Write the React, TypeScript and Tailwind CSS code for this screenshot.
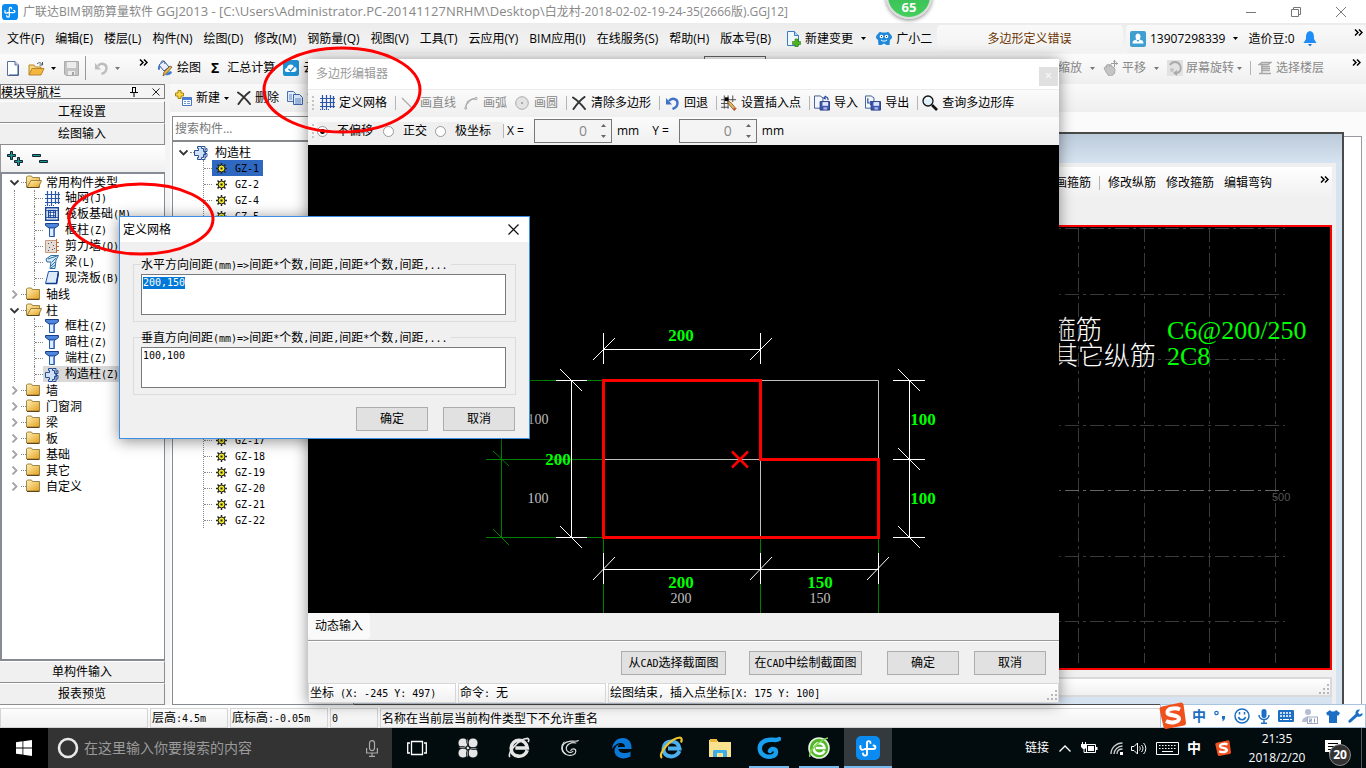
import React, { useEffect, useRef } from 'react';

const YA = "font-['Open_Sans','Noto_Sans_CJK_SC',sans-serif]";
const MONO = "font-['DejaVu_Sans_Mono',monospace] text-[10px]";

/* Latin runs are set in a half-width face beside the full-width Chinese. */
function Song({ children }: { children: string }) {
  return (
    <span className="whitespace-pre font-['Noto_Sans_CJK_SC',sans-serif] text-xs leading-4">
      {children.split(/([\x20-\x7e]+)/).map((part, i) =>
        i % 2 === 1 ? (
          <span key={i} className={MONO}>{part}</span>
        ) : (
          part
        ),
      )}
    </span>
  );
}

/* ---------- small shared pieces ---------- */

const Caret = ({ dim = false }: { dim?: boolean }) => (
  <svg width="5" height="3" viewBox="0 0 5 3" className="shrink-0">
    <path d="M0 0h5L2.500 3z" fill={dim ? '#777' : '#000'} />
  </svg>
);

const More = () => (
  <svg width="9" height="7" viewBox="0 0 9 7" className="shrink-0" fill="none" stroke="#000" strokeWidth="1.500">
    <path d="M1 .5l3 3-3 3M5 .5l3 3-3 3" />
  </svg>
);

const Sep = () => <span className="h-[14px] w-px shrink-0 bg-[#b5b5b5]" />;

const Grip = () => (
  <svg width="2" height="14" viewBox="0 0 2 14" className="shrink-0">
    <path d="M0 0h2v2H0zM0 4h2v2H0zM0 8h2v2H0zM0 12h2v2H0z" fill="#c4c4c4" />
  </svg>
);

const SizeGrip = () => (
  <svg width="11" height="11" viewBox="0 0 11 11" className="shrink-0">
    <path d="M8 0h2v2H8zM4 4h2v2H4zM8 4h2v2H8zM0 8h2v2H0zM4 8h2v2H4zM8 8h2v2H8z" fill="#b8b8b8" />
  </svg>
);

/* ---------- icons ---------- */

const AppLogo = ({ size = 16 }: { size?: number }) => (
  <svg width={size} height={size} viewBox="0 0 24 24" className="shrink-0">
    <rect width="24" height="24" rx="5" fill="#0b8bf0" />
    <path d="M14.500 7c0-2.500-3.500-2.500-3.500 0v11c0 2.500-4 2-4-.5M4.500 10c-1 4.500 2.500 4 4.500 3h8.500c2.500 0 2.500-3.500 0-3.500" fill="none" stroke="#fff" strokeWidth="1.900" strokeLinecap="round" />
  </svg>
);

const NewDoc = () => (
  <svg width="12" height="15" viewBox="0 0 12 15">
    <path d="M.5.5h7.500l3.500 3.500v10.500H.5z" fill="#fdfeff" stroke="#55719c" />
    <path d="M8 .5V4h3.500" fill="#cfdcf0" stroke="#55719c" />
    <path d="M11 5v9M2 14h9" stroke="#34507c" />
  </svg>
);

const OpenFolder = () => (
  <svg width="17" height="15" viewBox="0 0 17 15">
    <path d="M1 14V4h5l1.500 2H13v3" fill="#f7d77a" stroke="#b8862b" />
    <path d="M1 14l3-6.500h12L13 14z" fill="#f4b63d" stroke="#b8862b" />
    <path d="M9 3c2-2 4-1.500 5 .5M14.500 1v3h-3" fill="none" stroke="#456" />
  </svg>
);

const SaveGrey = () => (
  <svg width="15" height="15" viewBox="0 0 15 15">
    <path d="M.5.5h14v14H2l-1.500-1.500z" fill="#c3c3c3" stroke="#aaa" />
    <path d="M3 1h9v6H3zM4 10h7v4H4z" fill="#ececec" />
    <path d="M8 11h2v3H8z" fill="#a5a5a5" />
  </svg>
);

const Undo = ({ grey = false }: { grey?: boolean }) => (
  <svg width="14" height="14" viewBox="0 0 14 14" fill="none">
    <path d="M4 5c3-4 8.500-2 8.500 2 0 3-2 5-5 6" stroke={grey ? '#bdbdbd' : '#3f73c7'} strokeWidth="2.400" />
    <path d="M1 2v6.500h6z" fill={grey ? '#bdbdbd' : '#3f73c7'} />
  </svg>
);

const Paint = () => (
  <svg width="16" height="17" viewBox="0 0 16 17">
    <path d="M2 5l5-4 5 6-5 4z" fill="#e9f0fb" stroke="#365a96" />
    <path d="M2 5C0 8 1 10 2 10s1.500-2 1-4" fill="#4a78c4" />
    <path d="M4 3c0-3 4-3 4 1" fill="none" stroke="#365a96" />
    <path d="M15 7l-5 6-4 3 1-4 6-6z" fill="#e7b443" stroke="#5c4b23" strokeWidth=".7" />
    <path d="M8 15c3 1 7-1 7-3l-2-1z" fill="#4179d4" />
  </svg>
);

const CloudCheck = () => (
  <svg width="16" height="16" viewBox="0 0 16 16">
    <rect width="16" height="16" rx="2" fill="#1e8fd0" />
    <path d="M4 12c-3 0-3-4 0-4 0-4 6-5 7-1 4 0 3 5 0 5z" fill="#fff" />
    <path d="M5.500 9l2 2 3.500-4" fill="none" stroke="#1e8fd0" strokeWidth="1.400" />
  </svg>
);

const NewComp = () => (
  <svg width="17" height="16" viewBox="0 0 17 16">
    <path d="M3 .5h3V3h2.500v3H6v2.500H3V6H.5V3H3z" fill="#f7d649" stroke="#a8830e" />
    <path d="M7.500 7.500h9v8h-9z" fill="#fff" stroke="#4a76c0" />
    <path d="M8 8h8v2H8z" fill="#4a80d8" />
    <path d="M9 11.500h2M12 11.500h3M9 13.500h2M12 13.500h3" stroke="#6f98d8" />
  </svg>
);

const Cross = () => (
  <svg width="14" height="14" viewBox="0 0 14 14" fill="none" stroke="#333" strokeWidth="2" strokeLinecap="round">
    <path d="M1 1.500C5 4 9 8 13 13M12.500 1C8 4 5 8 1.500 13" />
  </svg>
);

const Copy = () => (
  <svg width="16" height="14" viewBox="0 0 16 14">
    <path d="M.5.5h6l2 2v8h-8z" fill="#e2edfc" stroke="#4a6fa9" />
    <path d="M6.500 3.500h6l3 3v7h-9z" fill="#dbe9fc" stroke="#3c65a8" />
    <path d="M2 4h3M2 6h3M2 8h3M8 8h6M8 10h6M8 12h6" stroke="#5e89cc" />
  </svg>
);

const DocPlus = () => (
  <svg width="15" height="16" viewBox="0 0 15 16">
    <path d="M1.500.5h7l4 4v10h-11z" fill="#f0f8ff" stroke="#3b7db8" />
    <path d="M8.500.5v4h4" fill="#b9d9f2" stroke="#3b7db8" />
    <path d="M9 8h3v2.500h2.500v3H12V16H9v-2.500H6.500v-3H9z" fill="#4fb520" stroke="#2e7d12" strokeWidth=".6" />
  </svg>
);

const Mascot = () => (
  <svg width="16" height="15" viewBox="0 0 16 15">
    <path d="M2.500 2C3.500.5 5 1 6 1.500h4c1-.5 2.500-1 3.500.5.5 1.500 2.500 2 2.500 4s-1.500 2-2 3l-.5 5h-3L8 12.500 5.500 14h-3L2 9C1.500 8 0 8 0 6s2-2.500 2.500-4z" fill="#2089db" />
    <circle cx="5.500" cy="5.500" r="1.800" fill="#fff" /><circle cx="10.500" cy="5.500" r="1.800" fill="#fff" />
    <path d="M5 9c2 1.500 4 1.500 6 0" fill="none" stroke="#fff" />
    <path d="M5 5h1v1H5zM10 5h1v1h-1z" fill="#124" />
  </svg>
);

const UserBox = () => (
  <svg width="16" height="16" viewBox="0 0 16 16" className="shrink-0">
    <rect width="16" height="16" rx="2" fill="#3f9fd0" />
    <path d="M5.500 5.500c0-4 5-4 5 0 0 2-1 3-1 3 2 .5 4 1 4 4h-11c0-3 2-3.500 4-4 0 0-1-1-1-3z" fill="#fff" />
    <path d="M6.500 9h3l-1.500 2z" fill="#3f9fd0" />
  </svg>
);

const Bell = () => (
  <svg width="14" height="16" viewBox="0 0 14 16" className="shrink-0">
    <path d="M7 0c4 1 4 4 4 8l2.500 4H.5L3 8c0-4 0-7 4-8z" fill="#1f8df5" />
    <path d="M5 13h4l-2 2.500z" fill="#1b75cf" />
  </svg>
);

const Grid = () => (
  <svg width="15" height="15" viewBox="0 0 15 15" stroke="#2b55a8" fill="none">
    <path d="M2.500 0v15M6.500 0v15M10.500 0v13M13.500 1v12M0 3.500h15M0 7.500h15M0 11.500h15" strokeWidth="1.200" />
    <path d="M0 14.500h1M4 14.500h1M8 14.500h1" />
  </svg>
);

const Line = () => (
  <svg width="14" height="14" viewBox="0 0 14 14"><path d="M1 2l9 9" stroke="#aaa" strokeWidth="1.200" /></svg>
);

const Arc = () => (
  <svg width="14" height="14" viewBox="0 0 14 14" fill="none" stroke="#a9a9a9">
    <path d="M1.500 13C1.500 7 6 2.500 12 2.500" strokeWidth="1.300" />
    <circle cx="12" cy="2.500" r="1.200" fill="#eee" /><circle cx="1.700" cy="12.300" r="1" fill="#eee" /><circle cx="4" cy="6" r="1" fill="#eee" />
  </svg>
);

const Disc = () => (
  <svg width="14" height="14" viewBox="0 0 14 14">
    <circle cx="7" cy="7" r="6.300" fill="#e3e3e3" stroke="#aaa" /><circle cx="7" cy="7" r="1" fill="#999" />
  </svg>
);

const SetPoint = () => (
  <svg width="17" height="16" viewBox="0 0 17 16">
    <path d="M3.500 0v14M7.500 0v14M12.500 0v7M0 4.500h16M0 8.500h9M0 12.500h8" stroke="#444" />
    <path d="M4 2h4v4H4z" fill="#000" />
    <path d="M7 6l3 1 6 7-2 2-6-7z" fill="#e3b566" stroke="#7a4c1c" strokeWidth=".8" />
    <path d="M13 13l3 1-2 2z" fill="#d43a2a" />
  </svg>
);

const Disk = ({ out = false }: { out?: boolean }) => (
  <svg width="17" height="16" viewBox="0 0 17 16">
    <path d="M.5.5h6l3 2v11h-9z" fill="#f2f6fd" stroke="#40578c" />
    <path d="M6.500 6.500h10v9h-10z" fill="#3d56b3" stroke="#263a80" />
    <path d="M9 7h6v4H9z" fill="#dfe6f8" /><path d="M10 12.500h4V15h-4z" fill="#aab6dc" />
    <path d={out ? 'M3 3v5h4M5.500 6l2 2-2 2' : 'M15 5c0-3-2-4-4-3M12.500.5l-2 2 2 1.500'} fill="none" stroke="#2c4a9b" strokeWidth="1.300" />
  </svg>
);

const Lens = () => (
  <svg width="16" height="16" viewBox="0 0 16 16">
    <circle cx="6" cy="6" r="5" fill="#ddf0fa" stroke="#111" strokeWidth="1.300" />
    <path d="M4 4c1-1 3-1 4 0" stroke="#fff" strokeWidth="1.500" fill="none" />
    <path d="M10 10l5 5" stroke="#111" strokeWidth="2.600" />
  </svg>
);

const Hand = () => (
  <svg width="15" height="16" viewBox="0 0 15 16">
    <path d="M1 8l1.500-1.500 1 1V5l2-.5 1 2V4.500l2 .5.500 2 2 .5 1 2-.5 4-3 2.500H6L3 12z" fill="#c4c4c4" stroke="#a8a8a8" />
    <path d="M11.500 0v7M8 3.500h7" stroke="#999" /><path d="M10 2L11.500 0 13 2M13 2l2 1.500L13 5" fill="#999" />
  </svg>
);

const Rotate = () => (
  <svg width="16" height="16" viewBox="0 0 16 16">
    <rect width="16" height="16" fill="#e2e2e2" />
    <path d="M3 5c2-4 8-4 10 0s0 8-4 8" fill="none" stroke="#aaa" strokeWidth="1.800" />
    <path d="M10 10v6l-4-3z" fill="#aaa" /><circle cx="5" cy="10" r="2" fill="#c5c5c5" />
  </svg>
);

const Floors = () => (
  <svg width="14" height="14" viewBox="0 0 14 14" fill="none" stroke="#a6a6a6">
    <path d="M4 1.500h9L10 3.500H1zM3 5.500h9M3 7.500h9M3 9.500h9M1 12.500h12M4 4v9" strokeWidth="1.300" />
  </svg>
);

const Folder = ({ open }: { open: boolean }) => (
  <svg width="16" height="14" viewBox="0 0 16 14" className="shrink-0">
    <defs>
      <linearGradient id="folderFill" x1="0" y1="0" x2="1" y2="1">
        <stop offset="0" stopColor="#fff1b8" /><stop offset="1" stopColor="#e3a11e" />
      </linearGradient>
    </defs>
    <path d="M.5 12V2l1-1h4l1 1.500h7V12z" fill="url(#folderFill)" stroke="#8a6c2c" strokeWidth=".8" />
    {open && <path d="M1 12.500l4-7h10.500l-3 7z" fill="url(#folderFill)" stroke="#8a6c2c" strokeWidth=".8" />}
    <path d="M1 12.500h12.500" stroke="#5c4720" />
  </svg>
);

const Raft = () => (
  <svg width="14" height="14" viewBox="0 0 14 14" fill="none" stroke="#16469b">
    <path d="M.7.7h12.600v12.600H.7zM3.500 3.500h7v7h-7z" strokeWidth="1.400" /><path d="M5.500 3v8M8.500 3v8M3 5.500h8M3 8.500h8M0 3.500h3M11 3.500h3M0 10.500h3M11 10.500h3" strokeWidth=".8" />
  </svg>
);

const Column = () => (
  <svg width="14" height="14" viewBox="0 0 14 14">
    <path d="M.5.5h13v2L10 5H4L.5 2.500z" fill="#4f86dc" stroke="#173f8a" />
    <path d="M4.500 5h5v8.500h-5z" fill="#e3eefd" stroke="#2456a8" /><path d="M8 6h1.500v7H8z" fill="#5c8fe0" />
  </svg>
);

const Wall = () => (
  <svg width="14" height="14" viewBox="0 0 14 14">
    <path d="M.5 1.500h11v12H.5z" fill="#e4dcd6" stroke="#c79a80" />
    <path d="M3 4h1v1H3zM6 3h1v1H6zM8 6h1v1H8zM4 8h1v1H4zM7 10h1v1H7zM3 11h1v1H3zM9 9h1v1H9z" fill="#555" />
    <path d="M11.500 3.500H14M11.500 7.500H14M11.500 11.500H14M11.500 0v14" stroke="#c66a3a" />
  </svg>
);

const Beam = () => (
  <svg width="14" height="14" viewBox="0 0 14 14">
    <path d="M1 4l5-3.500h7.500L11 5l-1 8.500H5L6 7H2z" fill="#d6e8f8" stroke="#2c6b9e" />
    <path d="M3 4l9-3M7 7l4-4M6 11l4-4M6 13l4-3" stroke="#2f79b0" />
  </svg>
);

const Slab = () => (
  <svg width="14" height="14" viewBox="0 0 14 14">
    <path d="M3.500.5h10l-2 12H.5z" fill="#dceafc" stroke="#2257a9" /><path d="M1 12.500h10.500l2-11" fill="none" stroke="#0d3c8a" strokeWidth="1.600" />
  </svg>
);

const GzCol = () => (
  <svg width="14" height="15" viewBox="0 0 14 15">
    <path d="M3.500 1.500h4v2h2v3h2v3h-2v3h-2v2h-4v-2h1v-2h-4v-5h4v-2h-1z" fill="#cfe0f8" stroke="#254e94" />
    <path d="M8 1.500h3v3l2-1v3h-2v2h2v3l-2 1v2H8M11 4.500v8" fill="none" stroke="#254e94" />
  </svg>
);

const Gear = () => (
  <svg width="11" height="11" viewBox="0 0 11 11" className="shrink-0">
    <path d="M5.500 0v11M0 5.500h11M1.500 1.500l8 8M9.500 1.500l-8 8" stroke="#222" strokeWidth="1.500" />
    <circle cx="5.500" cy="5.500" r="3.400" fill="#f3ee2c" stroke="#222" /><path d="M4.500 4.500h2v2h-2z" fill="#222" />
  </svg>
);

const Chevron = ({ open }: { open: boolean }) => (
  <svg width="9" height="9" viewBox="0 0 9 9" fill="none" strokeWidth="1.800" className="shrink-0">
    {open ? <path d="M.5 2.500l4 4 4-4" stroke="#333" /> : <path d="M2.500.5l4 4-4 4" stroke="#a3a3a3" />}
  </svg>
);

/* ---------- component navigation tree ---------- */

type Branch = { name: string; open?: boolean; kids?: { name: string; icon: React.ReactNode; on?: boolean }[] };

const branches: Branch[] = [
  {
    name: '常用构件类型', open: true, kids: [
      { name: '轴网(J)', icon: <Grid /> },
      { name: '筏板基础(M)', icon: <Raft /> },
      { name: '框柱(Z)', icon: <Column /> },
      { name: '剪力墙(Q)', icon: <Wall /> },
      { name: '梁(L)', icon: <Beam /> },
      { name: '现浇板(B)', icon: <Slab /> },
    ],
  },
  { name: '轴线' },
  {
    name: '柱', open: true, kids: [
      { name: '框柱(Z)', icon: <Column /> },
      { name: '暗柱(Z)', icon: <Column /> },
      { name: '端柱(Z)', icon: <Column /> },
      { name: '构造柱(Z)', icon: <GzCol />, on: true },
    ],
  },
  { name: '墙' }, { name: '门窗洞' }, { name: '梁' }, { name: '板' }, { name: '基础' }, { name: '其它' }, { name: '自定义' },
];

const members = [1, 2, 4, 5, 6, 7, 8, 9, 10, 11, 12, 13, 14, 15, 16, 23, 24, 17, 18, 19, 20, 21, 22];

function SideButton({ children }: { children: string }) {
  return (
    <button className="h-[22px] w-full shrink-0 border-b border-r border-t border-b-[#8d8d8d] border-r-[#8d8d8d] border-t-white bg-[#f0f0f0] text-center leading-5">
      <Song>{children}</Song>
    </button>
  );
}

function Navigator() {
  return (
    <nav className="flex w-[165px] shrink-0 flex-col">
      <div className="flex h-[15px] shrink-0 items-center border border-[#7c7c7c] leading-3">
        <Song>模块导航栏</Song>
        <button aria-label="固定" className="ml-auto mr-[14px]">
          <svg width="8" height="10" viewBox="0 0 8 10" fill="none" stroke="#000"><path d="M2 .5h4M2.500 0v5.500M5.500 0v5.500M0 5.500h8M4 6v4" /></svg>
        </button>
        <button aria-label="关闭" className="mr-1">
          <svg width="8" height="8" viewBox="0 0 8 8" stroke="#222"><path d="M.5.5l7 7M7.500.5l-7 7" /></svg>
        </button>
      </div>
      <div className="mt-0.5 flex flex-col"><SideButton>工程设置</SideButton><SideButton>绘图输入</SideButton></div>
      <div className="flex h-[27px] shrink-0 items-center gap-2 border-l border-[#999] bg-linear-to-b from-white to-[#f0f0f0] pl-1.5">
        <button aria-label="全部展开">
          <svg width="17" height="15" viewBox="0 0 17 15" fill="none" strokeWidth="1"><path d="M3.500.5h2v3h3v2h-3v3h-2v-3h-3v-2h3zM10.500 6.500h2v3h3v2h-3v3h-2v-3h-3v-2h3z" fill="#1f9b8f" stroke="#123" /></svg>
        </button>
        <button aria-label="全部折叠">
          <svg width="16" height="12" viewBox="0 0 16 12"><path d="M.5 1.500h8v2h-8zM7.500 7.500h8v2h-8z" fill="#1f9b8f" stroke="#123" /></svg>
        </button>
      </div>
      <div className="flex-1 overflow-hidden border-2 border-r border-[#868b94] bg-white">
        <ul>
          {branches.map((b) => (
            <li key={b.name}>
              <button className="flex h-4 items-center pl-2">
                <Chevron open={!!b.open} />
                <span className="ml-0.5 w-[5px] border-t border-dotted border-[#888]" />
                <Folder open={!!b.open} />
                <span className="ml-1"><Song>{b.name}</Song></span>
              </button>
              {b.kids && (
                <ul className="ml-3 border-l border-dotted border-[#888]">
                  {b.kids.map((k) => (
                    <li key={k.name} className="ml-[19px] border-l border-dotted border-[#888]">
                      <button className="flex h-4 items-center whitespace-nowrap">
                        <span className="w-2 border-t border-dotted border-[#888]" />
                        <span className={k.on ? 'flex h-4 items-center bg-[#d9d9d9] pl-0.5' : 'flex h-4 items-center pl-0.5'}>
                          <span className="flex w-5">{k.icon}</span><Song>{k.name}</Song>
                        </span>
                      </button>
                    </li>
                  ))}
                </ul>
              )}
            </li>
          ))}
        </ul>
      </div>
      <SideButton>单构件输入</SideButton>
      <SideButton>报表预览</SideButton>
    </nav>
  );
}

function MemberPanel() {
  return (
    <section className="flex w-[184px] shrink-0 flex-col pl-0.5">
      <input aria-label="搜索构件" placeholder="搜索构件..." className={`mt-1 h-[25px] w-full shrink-0 border border-[#888] bg-white px-0.5 text-xs tracking-normal text-[#333] outline-none placeholder:text-[#777] ${YA}`} />
      <div className="w-full flex-1 overflow-hidden border border-[#868b94] bg-white">
        <div className="mt-0.5 flex h-4 items-center pl-1.5">
          <Chevron open />
          <span className="ml-0.5 w-1 border-t border-dotted border-[#888]" />
          <GzCol /><span className="ml-[7px]"><Song>构造柱</Song></span>
        </div>
        <ul className="ml-[30px] border-l border-dotted border-[#888]">
          {members.map((n) => (
            <li key={n} className="flex h-4 items-center">
              <span className="w-2 border-t border-dotted border-[#888]" />
              <button className={n === 1 ? 'flex h-4 items-center gap-2 bg-[#2f68c0] pl-1 pr-1' : 'flex h-4 items-center gap-2 pl-1 pr-1'}>
                <Gear /><Song>{`GZ-${n}`}</Song>
              </button>
            </li>
          ))}
        </ul>
      </div>
    </section>
  );
}

/* ---------- section drawing window ---------- */

function SectionWindow() {
  return (
    <section className="flex flex-1 pt-5 pr-1">
      <div className="flex flex-1 flex-col border-b border-r-2 border-t-2 border-[#4a4a4a] bg-[#d6e3f1]">
        <div className="h-[29px] shrink-0 bg-linear-to-b from-[#bccbda] to-[#d6e3f1]" />
        <div className="mr-1.5 flex flex-1 flex-col border-r-4 border-t-4 border-[#efefef] bg-[#f0f0f0]">
          <div className={`flex h-[32px] shrink-0 items-center justify-end bg-linear-to-b from-white to-[#f0f0f0] text-xs leading-4 ${YA}`}>
            <button>画箍筋</button>
            <span className="mx-2 flex"><Sep /></span>
            <button>修改纵筋</button>
            <button className="ml-[10px]">修改箍筋</button>
            <button className="ml-[10px] mr-12">编辑弯钩</button>
            <button aria-label="更多" className="mb-2 mr-[3px]"><More /></button>
          </div>
          <div className="mt-[26px] flex flex-1 justify-end border-b-2 border-r-2 border-t-2 border-[#f00] bg-black">
            <svg width="292" height="436" viewBox="1038 227 292 436">
              <g stroke="#3a3a3a" strokeDasharray="14 4 3 4" fill="none">
                <path d="M1078.500 228v438M1144.500 228v438M1209.500 228v438M1275.500 228v438" />
                <path d="M1040 228.500h245M1040 294.500h245M1040 359.500h245M1040 425.500h245M1040 556.500h245M1040 621.500h245" />
                <path d="M1040 490.500h245" stroke="#666" />
              </g>
              <g fill="#fff" fontFamily="'Noto Sans CJK SC'" fontWeight="300" fontSize="26">
                <text x="1050" y="339">箍筋</text><text x="1052" y="365">其它纵筋</text>
              </g>
              <g fill="#0f0" fontFamily="'Liberation Serif'" fontSize="26">
                <text x="1167" y="339">C6@200/250</text><text x="1167" y="365">2C8</text>
              </g>
              <text x="1272" y="501" fill="#555" fontFamily="'Liberation Sans'" fontSize="11">500</text>
            </svg>
          </div>
          <div className="mt-[7px] flex h-5 shrink-0 items-end justify-end border-2 border-[#dadada] bg-linear-to-b from-white to-[#f0f0f0]"><SizeGrip /></div>
          <div className="h-[7px] shrink-0 bg-[#d6e3f1]" />
        </div>
      </div>
      <div className="mt-1 w-[18px] shrink-0 border-b border-r border-t border-[#999ba3] bg-white" />
    </section>
  );
}

/* ---------- polygon editor ---------- */

function Tool({ icon, label, dim }: { icon: React.ReactNode; label: string; dim?: boolean }) {
  return (
    <button className={dim ? 'flex shrink-0 items-center gap-1 text-[#888]' : 'flex shrink-0 items-center gap-1 text-black'}>
      <span className="flex w-4 justify-center">{icon}</span>{label}
    </button>
  );
}

function Offset({ id, label }: { id: string; label: string }) {
  return (
    <div className="flex items-center">
      <label htmlFor={id}>{label} =</label>
      <div className="ml-2.5 mr-[5px] flex h-6 w-[78px] items-center border border-[#777] bg-[#f4f4f4]">
        <input id={id} defaultValue="0" className="w-0 flex-1 bg-transparent pr-2.5 text-right text-sm text-[#888] outline-none" />
        <div className="flex w-[14px] flex-col gap-2 pl-1">
          <button aria-label={`${label} +`}><svg width="5" height="3" viewBox="0 0 5 3" className="block"><path d="M0 3h5L2.500 0z" fill="#666" /></svg></button>
          <button aria-label={`${label} -`}><svg width="5" height="3" viewBox="0 0 5 3" className="block"><path d="M0 0h5L2.500 3z" fill="#666" /></svg></button>
        </div>
      </div>
      <span>mm</span>
    </div>
  );
}

function Plan() {
  return (
    <svg viewBox="308 145 751 468" className="block w-full bg-black">
      <g stroke="#008000" fill="none">
        <path d="M486 380.500h117M486 459.500h117M486 537.500h117M501.500 380v158M603.500 537v76M760.500 537v76M878.500 537v76" />
        <path d="M493 451l16 15M493 529l16 16" />
      </g>
      <g stroke="#c0c0c0" fill="none">
        <path d="M760 380.500h118.500v79M603 459.500h157.500v78" />
      </g>
      <g stroke="#fff" fill="none">
        <path d="M571.500 380v158M556 380.500h31M556 537.500h31M560 369l22 22M560 526l22 22" />
        <path d="M603 349.500h158M603.500 333v31M760.500 333v31M593 360l22-22M750 360l22-22" />
        <path d="M909.500 380v158M893 380.500h32M893 459.500h32M893 537.500h32M898 369l22 22M898 448l22 22M898 526l22 22" />
        <path d="M603 569.500h276M603.500 553v31M760.500 553v31M878.500 553v31M593 580l22-23M750 580l22-23M867 580l22-23" />
      </g>
      <path d="M603.500 380.500h157v79h118v78h-275z" fill="none" stroke="#f00" strokeWidth="3" />
      <path d="M732 451.500l16 16M748 451.500l-16 16" stroke="#f00" strokeWidth="2.500" />
      <g fill="#0f0" fontFamily="'Liberation Serif'" fontWeight="700" fontSize="17" textAnchor="middle">
        <text x="681" y="341">200</text><text x="558" y="465">200</text><text x="923" y="425">100</text>
        <text x="923" y="504">100</text><text x="681" y="588">200</text><text x="820" y="588">150</text>
      </g>
      <g fill="#c0c0c0" fontFamily="'Liberation Serif'" fontSize="14" textAnchor="middle">
        <text x="538" y="424">100</text><text x="538" y="503">100</text><text x="681" y="603">200</text><text x="820" y="603">150</text>
      </g>
    </svg>
  );
}

const dialogButton = 'h-6 border border-[#adadad] bg-[#e1e1e1] leading-5';
const radio = 'size-[11px] appearance-none rounded-full border border-[#999]';

function PolygonEditor() {
  return (
    <section className={`absolute left-[308px] top-[59px] w-[751px] bg-[#f0f0f0] text-xs leading-4 text-black shadow-[0_1px_14px_rgba(0,0,0,0.45)] ${YA}`}>
      <header className="flex h-[30px] items-center bg-white pl-2 pr-px text-[#999]">
        <h2>多边形编辑器</h2>
        <button aria-label="关闭" className="ml-auto mt-1 flex size-[19px] items-center justify-center bg-[#e0e0e0] text-white">×</button>
      </header>
      <div className="flex h-7 items-center gap-2 border-t border-[#ececec] bg-linear-to-b from-[#fbfbfb] to-[#efefef] pb-0.5 pl-1">
        <Grip />
        <span className="-ml-[3px] flex"><Tool icon={<Grid />} label="定义网格" /></span><Sep />
        <span className="-ml-1 flex gap-[7px]">
          <Tool dim icon={<Line />} label="画直线" /><Tool dim icon={<Arc />} label="画弧" /><Tool dim icon={<Disc />} label="画圆" />
        </span>
        <Sep /><span className="-ml-1 flex"><Tool icon={<Cross />} label="清除多边形" /></span>
        <Sep /><span className="-ml-1 flex"><Tool icon={<Undo />} label="回退" /></span>
        <Sep /><span className="-ml-1 flex"><Tool icon={<SetPoint />} label="设置插入点" /></span>
        <Sep /><span className="-ml-1 flex gap-[7px]"><Tool icon={<Disk />} label="导入" /><Tool icon={<Disk out />} label="导出" /></span>
        <Sep /><span className="-ml-1 flex"><Tool icon={<Lens />} label="查询多边形库" /></span>
      </div>
      <div className="flex h-7 items-center bg-linear-to-b from-[#fbfbfb] to-[#efefef] pl-1">
        <Grip />
        <div className="ml-[3px] flex h-[18px] w-[186px] items-center bg-[#efefef]">
          <label className="flex items-center gap-[9px]">
            <input type="radio" name="offset" defaultChecked className={`${radio} bg-white bg-[radial-gradient(circle,#000_2px,transparent_3px)]`} />不偏移
          </label>
          <label className="ml-2.5 flex items-center gap-[9px]">
            <input type="radio" name="offset" className={`${radio} bg-white`} />正交
          </label>
          <label className="ml-2 flex items-center gap-[9px]">
            <input type="radio" name="offset" className={`${radio} bg-white`} />极坐标
          </label>
        </div>
        <Sep />
        <div className="ml-[3px] flex gap-[13px]"><Offset id="off-x" label="X" /><Offset id="off-y" label="Y" /></div>
      </div>
      <Plan />
      <div className="flex h-7 items-start border-b border-[#999]">
        <button className="h-[26px] rounded-sm bg-[#fafafa] px-[7px]">动态输入</button>
      </div>
      <div className="flex h-[42px] items-center justify-end border-t border-white pr-[13px]">
        <button className={`${dialogButton} w-[105px]`}><Song>从CAD选择截面图</Song></button>
        <button className={`${dialogButton} ml-[23px] w-[113px]`}><Song>在CAD中绘制截面图</Song></button>
        <button className={`${dialogButton} ml-[25px] w-[72px]`}><Song>确定</Song></button>
        <button className={`${dialogButton} ml-[15px] w-[72px]`}><Song>取消</Song></button>
      </div>
      <footer className="flex h-5 items-stretch gap-0.5 bg-linear-to-b from-white to-[#f0f0f0]">
        <div className="flex w-[148px] items-center border border-[#d7d7d7] pl-px"><Song>坐标 (X: -245 Y: 497)</Song></div>
        <div className="flex w-[148px] items-center border border-[#d7d7d7] pl-px"><Song>命令: 无</Song></div>
        <div className="flex flex-1 items-center border border-[#d7d7d7] pl-px"><Song>绘图结束, 插入点坐标[X: 175 Y: 100]</Song><span className="mb-px ml-auto self-end"><SizeGrip /></span></div>
      </footer>
    </section>
  );
}

/* ---------- grid definition dialog ---------- */

const box = `mx-[7px] mb-1.5 mt-0.5 block h-[41px] w-[365px] resize-none border border-[#7a7a7a] bg-white px-px py-0.5 leading-3 outline-none selection:bg-[#0078d7] selection:text-white ${MONO}`;

function GridDialog() {
  const first = useRef<HTMLTextAreaElement>(null);
  useEffect(() => {
    first.current?.focus();
    first.current?.select();
  }, []);
  return (
    <section className="absolute left-[119px] top-[216px] w-[411px] border border-[#3a8ee6] bg-[#f0f0f0] pb-[7px] text-black shadow-[0_2px_14px_rgba(0,0,0,0.45)]">
      <header className={`flex h-[25px] items-center bg-white pl-[3px] pr-2.5 text-xs leading-4 ${YA}`}>
        <h2>定义网格</h2>
        <button aria-label="关闭" className="ml-auto">
          <svg width="11" height="11" viewBox="0 0 11 11" stroke="#111" strokeWidth="1.200"><path d="M.5.5l10 10M10.500.5l-10 10" /></svg>
        </button>
      </header>
      <div className="flex flex-col gap-[7px] px-[13px] pt-[14px]">
        <fieldset className="border border-[#dcdcdc]">
          <legend className="ml-[7px] h-4 pr-1 leading-4"><label htmlFor="grid-h"><Song>水平方向间距(mm)=&gt;间距*个数,间距,间距*个数,间距,...</Song></label></legend>
          <textarea id="grid-h" ref={first} defaultValue="200,150" className={box} />
        </fieldset>
        <fieldset className="border border-[#dcdcdc]">
          <legend className="ml-[7px] h-4 pr-1 leading-4"><label htmlFor="grid-v"><Song>垂直方向间距(mm)=&gt;间距*个数,间距,间距*个数,间距,...</Song></label></legend>
          <textarea id="grid-v" defaultValue="100,100" className={box} />
        </fieldset>
      </div>
      <div className="mt-3 flex justify-end gap-[15px] pr-3.5">
        <button className={`${dialogButton} w-[72px]`}><Song>确定</Song></button>
        <button className={`${dialogButton} w-[72px]`}><Song>取消</Song></button>
      </div>
    </section>
  );
}

/* ---------- main window bars ---------- */

const menus = ['文件(F)', '编辑(E)', '楼层(L)', '构件(N)', '绘图(D)', '修改(M)', '钢筋量(Q)', '视图(V)', '工具(T)', '云应用(Y)', 'BIM应用(I)', '在线服务(S)', '帮助(H)', '版本号(B)'];

function TitleBar() {
  return (
    <header className={`flex h-[23px] shrink-0 items-center bg-white pl-0.5 pr-5 text-xs leading-4 text-[#888] ${YA}`}>
      <AppLogo />
      <h1 className="ml-[5px] whitespace-nowrap">广联达BIM钢筋算量软件 <span className="text-[13px]">GGJ2013 - [C:\Users\Administrator.PC-20141127NRHM\Desktop\</span>白龙村-2018-02-02-19-24-35(2666版).GGJ12]</h1>
      <div className="ml-auto flex items-center gap-[35px]">
        <button aria-label="最小化"><svg width="10" height="10" viewBox="0 0 10 10" stroke="#777"><path d="M0 5.500h10" /></svg></button>
        <button aria-label="还原"><svg width="10" height="10" viewBox="0 0 10 10" stroke="#777" fill="none"><path d="M.5 2.500h7v7h-7zM2.500 2V.5h7v7H8" /></svg></button>
        <button aria-label="关闭"><svg width="10" height="10" viewBox="0 0 10 10" stroke="#777"><path d="M0 0l10 10M10 0L0 10" /></svg></button>
      </div>
    </header>
  );
}

function MenuBar() {
  return (
    <div className="flex h-[31px] shrink-0 items-center bg-linear-to-b from-[#ececec] to-[#f4f4f4]">
      <div className="flex w-[937px] items-center gap-[11px] whitespace-nowrap pl-[7px]">
        {menus.map((m) => <button key={m}>{m}</button>)}
        <button className="ml-1 flex items-center gap-1"><DocPlus />新建变更<span className="ml-1"><Caret /></span></button>
        <button className="-ml-px flex items-center gap-1"><Mascot />广小二</button>
      </div>
      <div className="h-7 flex-1 rounded-sm bg-linear-to-b from-[#f9f9f9] to-[#f2f2f2] pr-px text-center leading-7 text-[#6b3300]">多边形定义错误</div>
      <div className="ml-[3px] flex h-7 w-[240px] items-center rounded-sm bg-linear-to-b from-[#f9f9f9] to-[#f0f0f0] pl-1 pr-[3px]">
        <UserBox />
        <button className="ml-1 flex items-center gap-2">13907298339<Caret /></button>
        <span className="ml-2.5 mr-2">造价豆:0</span>
        <Bell />
        <button aria-label="更多" className="mb-3 ml-auto"><More /></button>
      </div>
    </div>
  );
}

function ToolBar() {
  return (
    <div className="flex h-[30px] shrink-0 items-center bg-linear-to-b from-[#fcfcfc] to-[#efefef] pb-0.5">
      <div className="flex w-[153px] items-center pl-[7px]">
        <button aria-label="新建"><NewDoc /></button>
        <button aria-label="打开" className="ml-[9px] flex items-center gap-1.5"><OpenFolder /><Caret /></button>
        <button aria-label="保存" className="ml-2"><SaveGrey /></button>
        <span className="ml-1.5 h-6 w-px bg-[#999]" />
        <button aria-label="撤销" className="ml-2 flex items-center gap-[7px]"><Undo grey /><Caret dim /></button>
        <button aria-label="更多" className="mb-3 ml-auto mr-[5px]"><More /></button>
      </div>
      <button className="ml-1 flex items-center gap-1"><Paint />绘图</button>
      <button className="ml-2.5 flex items-center gap-2"><span className="text-sm font-bold">Σ</span>汇总计算</button>
      <button className="ml-2 flex items-center gap-1"><CloudCheck />云检查</button>
      <select aria-label="楼层" className="ml-auto mr-[292px] h-6 w-[62px] appearance-none border border-[#666] bg-white" />
      <div className="flex items-center text-[#888]">
        <button className="flex items-center gap-2">缩放<Caret dim /></button>
        <button className="ml-2 flex items-center gap-1"><Hand />平移<span className="ml-1"><Caret dim /></span></button>
        <button className="ml-2 flex items-center gap-[3px]"><Rotate />屏幕旋转<Caret dim /></button>
        <span className="ml-2 mr-[7px] flex"><Sep /></span>
        <button className="flex items-center gap-1"><Floors />选择楼层</button>
      </div>
      <button aria-label="更多" className="mb-3 ml-7 mr-[5px]"><More /></button>
    </div>
  );
}

function StatusBar() {
  const cell = 'flex items-center border border-[#d4d4d4] pl-px';
  return (
    <footer className="flex h-[23px] shrink-0 items-stretch gap-0.5 bg-linear-to-b from-white to-[#f0f0f0] pt-[3px]">
      <div className={`${cell} w-[148px]`} />
      <div className={`${cell} w-[78px]`}><Song>层高:4.5m</Song></div>
      <div className={`${cell} w-[98px]`}><Song>底标高:-0.05m</Song></div>
      <div className={`${cell} w-[48px]`}><Song>0</Song></div>
      <div className={`${cell} flex-1`}><Song>名称在当前层当前构件类型下不允许重名</Song></div>
    </footer>
  );
}

/* ---------- input-method bar ---------- */

const SogouMark = ({ size }: { size: number }) => (
  <svg width={size} height={size} viewBox="0 0 27 27" className="shrink-0">
    <path d="M3 4.500L22 .5q2 0 2.500 2L27 21q0 2-2 2.500L7 27q-2 0-2.500-2L.5 7q0-2 2.500-2.500z" fill="#f0501c" />
    <path d="M21 7.500C16 5 7 7 8.500 11c1 3 11 1.500 11.500 5.500.3 4-8.500 5-13 2.500" fill="none" stroke="#fff" strokeWidth="4" />
  </svg>
);

function ImeBar() {
  return (
    <div className="absolute bottom-10 right-0 flex h-6 w-[206px] items-center gap-2 border border-[#a9c4dc] bg-white text-[#1c6fc4]">
      <span className="-ml-0.5 -mt-0.5"><SogouMark size={27} /></span>
      <span className="-ml-0.5 text-sm font-bold">中</span>
      <svg width="12" height="12" viewBox="0 0 12 12"><circle cx="2.500" cy="3" r="1.700" fill="none" stroke="#1c6fc4" strokeWidth="1.200" /><path d="M8 6h3c.5 3-1 5-3 5.500 1-1.500 1-2 0-3z" fill="#1c6fc4" /></svg>
      <svg width="16" height="16" viewBox="0 0 16 16" fill="none" stroke="#1c6fc4" strokeWidth="1.500"><circle cx="8" cy="8" r="7" /><path d="M4.500 9c1 3.500 6 3.500 7 0M5.500 4v2.500M10.500 4v2.500" /></svg>
      <svg width="12" height="15" viewBox="0 0 12 15"><rect x="3.500" width="5" height="9" rx="2.500" fill="#1c6fc4" /><path d="M1 6c0 6 10 6 10 0M6 11v3M3 14.300h6" fill="none" stroke="#1c6fc4" strokeWidth="1.500" /></svg>
      <svg width="16" height="12" viewBox="0 0 16 12"><rect width="16" height="12" rx="1" fill="#1c6fc4" /><path d="M2 3h12M2 6h12" stroke="#fff" strokeDasharray="2 1" strokeWidth="1.500" /><path d="M2 9.500h2M5 9.500h6M12 9.500h2" stroke="#fff" /></svg>
      <svg width="16" height="15" viewBox="0 0 16 15"><circle cx="6" cy="3" r="3" fill="#b4bdd2" /><path d="M0 13c0-7 12-7 12 0z" fill="#b4bdd2" /><rect x="5.500" y="8" width="10" height="6.500" fill="#fff" stroke="#9da9c4" /><path d="M7 10h2.500v1.500H7.500v1.500H10M12.500 9.500v4" stroke="#8c99b8" fill="none" /></svg>
      <svg width="14" height="13" viewBox="0 0 14 13"><path d="M4 0c1 2 5 2 6 0l4 3-2 3-1-1v8H3V5L2 6 0 3z" fill="#1c6fc4" /></svg>
      <svg width="15" height="14" viewBox="0 0 15 14"><path d="M14.500 4l-3 1.500-1.500-2L12 .5C9 0 7 2 7.500 5L.5 11.500c-.5 2 1 2.500 2 2L9.500 7.500c3 1 5.500-1 5-3.500z" fill="#1c6fc4" /></svg>
    </div>
  );
}

/* ---------- taskbar ---------- */

const EdgeShape = ({ color }: { color: string }) => (
  <path d="M1 11C2 3 7 0 12 0c6 0 9 5 8.500 11H7.500c0 4 7 5.500 12 2.500v5C11 23 3 19 3.500 12 4 9 6 7 8.500 6 7 7.500 7 8 7 9h7c0-5-8-6-13 2z" fill={color} />
);

const Swirl = ({ a, size, w }: { a: string; size: number; w: number }) => (
  <svg width={size} height={size} viewBox="0 0 24 24" fill="none" stroke={a} strokeWidth={w} strokeLinecap="round">
    <path d="M22 3c-3 2-6 0-11 1C5 5 2 9 3 14c1 6 8 8 13 6 4-1.500 4-7 0-7-2 0-2.500 1-3 2" />
    {w < 3 && <path d="M19 6c-6-1.500-12 2-11.500 7 .5 4 5 5.500 8 3M5 5c-4 4-4 11 1 14" />}
  </svg>
);

function TaskButton({ label, active, running, children }: { label: string; active?: boolean; running?: boolean; children: React.ReactNode }) {
  const tone = active ? 'w-12 bg-[#33393c] border-[#76b9ed]' : running ? 'w-10 mx-[5px] border-[#76b9ed]' : 'w-[49px] border-transparent';
  return <button aria-label={label} className={`flex h-10 shrink-0 items-center justify-center border-b-2 pt-0.5 ${tone}`}>{children}</button>;
}

function Taskbar() {
  return (
    <footer className={`flex h-10 shrink-0 items-center bg-[#020b0e] text-xs text-white ${YA}`}>
      <button aria-label="开始" className="flex h-10 w-12 items-center justify-center bg-black">
        <svg width="16" height="16" viewBox="0 0 16 16" fill="#fff"><path d="M0 2.200l6.500-.9v6.200H0zM7.300 1.200L16 0v7.500H7.300zM0 8.400h6.500v6.200L0 13.700zM7.300 8.400H16V16l-8.700-1.200z" /></svg>
      </button>
      <div className="flex h-10 w-[344px] items-center bg-[#333] pl-[9px] pr-3.5">
        <svg width="22" height="22" viewBox="0 0 22 22"><circle cx="11" cy="11" r="9" fill="none" stroke="#e8e8e8" strokeWidth="2.600" /></svg>
        <input aria-label="在这里输入你要搜索的内容" placeholder="在这里输入你要搜索的内容" className="ml-[5px] w-0 flex-1 bg-transparent text-sm outline-none placeholder:text-[#9a9a9a]" />
        <button aria-label="语音">
          <svg width="12" height="17" viewBox="0 0 12 17" fill="none" stroke="#aaa" strokeWidth="1.200"><rect x="3.500" y=".6" width="5" height="10" rx="2.500" /><path d="M.6 8v5h10.800V8M6 13v3M3 16.400h6" /></svg>
        </button>
      </div>
      <div className="mr-[3px] flex gap-0.5">
        <TaskButton label="任务视图">
          <svg width="20" height="16" viewBox="0 0 20 16" fill="none" stroke="#fff" strokeWidth="1.300"><path d="M4.500 1.500h11v13h-11zM3 3H.7v10H3M17 3h2.300v10H17" /></svg>
        </TaskButton>
        <TaskButton label="风车">
          <svg width="22" height="22" viewBox="0 0 22 22" fill="#e6e6e6" stroke="#020b0e" strokeWidth=".8">
            <circle cx="6" cy="6" r="5" /><circle cx="16" cy="6" r="5" /><circle cx="16" cy="16" r="5" /><circle cx="6" cy="16" r="5" />
            <path d="M11 1v6c0 3 1 4 4 4h6c-2 2-6 2-8 .5-1 0-2 1-2 3V21c-2-2-2-6-.5-8 0-1-1-2-3-2H1c2-2 6-2 8-.5 1 0 1.500-1 1.500-3C9 5 9.500 3 11 1z" />
          </svg>
        </TaskButton>
        <TaskButton label="浏览器">
          <svg width="22" height="22" viewBox="0 0 24 24"><path d="M21 14.500C18 24 3 23 3.500 12 4 1 20 1 21 12H8" fill="none" stroke="#e6e6e6" strokeWidth="4" /><path d="M2 22C-1 17 12 2 21 1.500c2 0 2 2 1 4" fill="none" stroke="#e6e6e6" strokeWidth="1.800" /></svg>
        </TaskButton>
        <TaskButton label="广联达云"><Swirl a="#ddd" size={20} w={1.400} /></TaskButton>
      </div>
      <TaskButton label="Edge"><svg width="21" height="21" viewBox="0 0 21 21"><EdgeShape color="#0a78d7" /></svg></TaskButton>
      <TaskButton label="Internet Explorer">
        <svg width="24" height="24" viewBox="0 0 24 24"><path d="M20.500 15C17 23 4 22 4.500 12.500 5 3 19.500 3 20.500 12.500H9" fill="none" stroke="#4db0ee" strokeWidth="4" /><path d="M3 22C-2 18 12 2 21 1.500c2 0 2 3 1 5" fill="none" stroke="#f0c52c" strokeWidth="2.200" /></svg>
      </TaskButton>
      <TaskButton label="资源管理器">
        <svg width="22" height="19" viewBox="0 0 22 19"><path d="M0 1h8l1.500 2H22v15H0z" fill="#fbe08d" /><path d="M1 0h7v3H1z" fill="#eeb93a" /><path d="M4 18v-6l1-1h12l1 1v6h-4v-4H8v4z" fill="#3aaee8" /></svg>
      </TaskButton>
      <TaskButton label="广联达" running><Swirl a="#18a0ee" size={24} w={4.500} /></TaskButton>
      <TaskButton label="360浏览器" running>
        <svg width="22" height="22" viewBox="0 0 22 22"><circle cx="11" cy="11" r="10" fill="#52b82a" stroke="#e8f5e0" strokeWidth="1.600" /><path d="M16.500 13.500c-2 5-11 4-10.500-2.500.5-6.500 10-6 10.500 0H8" fill="none" stroke="#fff" strokeWidth="2.400" /><path d="M2 20C0 15 11 3 20 1" fill="none" stroke="#7fd455" strokeWidth="1.500" /></svg>
      </TaskButton>
      <TaskButton label="广联达BIM钢筋算量软件" active><AppLogo size={24} /></TaskButton>

      <div className="ml-auto flex h-10 items-center">
        <span className="mr-2.5">链接</span>
        <svg width="12" height="7" viewBox="0 0 12 7" fill="none" stroke="#fff" strokeWidth="1.400" className="mr-2.5"><path d="M.5 6.500L6 1l5.500 5.500" /></svg>
        <svg width="17" height="12" viewBox="0 0 17 12" className="mr-3"><path d="M5.500 2.500h9v8h-9z" fill="none" stroke="#fff" /><path d="M7 4h6v5H7zM15 5h1.500v3H15zM0 2h6v3L4 7H2L0 5zM1 0h1v2H1zM4 0h1v2H4z" fill="#fff" /><path d="M3 7v3.500h3" stroke="#fff" fill="none" /></svg>
        <svg width="13" height="13" viewBox="0 0 13 13" fill="none" stroke="#ccc" strokeWidth="1.300" className="mr-2"><path d="M1 12C1 6 6 1 12.500 1M4 12c0-4 4-8 8.500-8M7 12c0-3 2-5 5.500-5" /><path d="M10 10h3v3h-3z" fill="#fff" stroke="none" /></svg>
        <svg width="17" height="13" viewBox="0 0 17 13" fill="none" stroke="#fff" className="mr-2"><path d="M.5 4.500h2.500L6.500 1v11L3 8.500H.5zM8.500 4.500c1 1 1 3 0 4M10.500 3c2 2 2 5 0 7M12.500 1c3 3 3 8 0 11" /></svg>
        <svg width="23" height="13" viewBox="0 0 23 13" fill="none" stroke="#fff" className="mr-2"><path d="M.5.5h22v12H.5z" /><path d="M3 3.500h17M3 6.500h17" strokeDasharray="1.500 1.500" /><path d="M6 9.500h11" /></svg>
        <span className="mr-3.5 text-sm font-bold">中</span>
        <SogouMark size={16} />
        <div className="ml-3.5 w-[64px] text-center leading-[19px]"><div>21:35</div><div>2018/2/20</div></div>
        <button aria-label="通知" className="relative ml-4 mr-2.5 h-10 w-[26px]">
          <svg width="16" height="16" viewBox="0 0 16 16" className="absolute left-0 top-3"><path d="M0 0h16v12H7l-3 3v-3H0z" fill="#fff" /><path d="M3 3.500h10M3 6.500h10M3 9.500h5" stroke="#000" /></svg>
          <span className="absolute left-1 top-4 flex size-[22px] items-center justify-center rounded-full border border-[#888] bg-[#333] font-bold">20</span>
        </button>
        <span className="mr-1 h-10 w-px bg-[#555]" />
      </div>
    </footer>
  );
}

export default function App() {
  return (
    <div className={`relative flex min-h-screen w-full flex-col overflow-hidden bg-[#f0f0f0] text-xs leading-4 text-black ${YA}`}>
      <TitleBar />
      <MenuBar />
      <ToolBar />
      <main className="flex flex-1 bg-[#f4f4f4]">
        <Navigator />
        <div className="ml-[5px] flex min-w-0 flex-1 flex-col">
          <div className="flex h-7 shrink-0 items-center bg-linear-to-b from-[#fafafa] to-[#efefef] pl-[5px]">
            <button className="flex items-center gap-1"><NewComp />新建<Caret /></button>
            <button className="ml-2 flex items-center gap-1"><Cross />删除</button>
            <button className="ml-2 flex items-center gap-1"><Copy />复制</button>
          </div>
          <div className="flex flex-1 bg-[#fbfbfb]">
            <MemberPanel />
            <SectionWindow />
          </div>
        </div>
      </main>
      <StatusBar />
      <Taskbar />

      <div className="absolute left-[886px] top-[-27px] flex size-[46px] items-end justify-center rounded-full border-2 border-[#ddd] bg-linear-to-b from-[#2fb457] to-[#45cf5b] pb-0.5 text-[13px] font-bold leading-4 text-white shadow-[0_1px_4px_rgba(0,0,0,0.5)]">65</div>
      <PolygonEditor />
      <ImeBar />
      <GridDialog />
      <svg width="440" height="270" viewBox="0 0 440 270" className="pointer-events-none absolute left-0 top-0" fill="none" stroke="#f00" strokeWidth="3">
        <ellipse cx="342" cy="90" rx="78" ry="42" />
        <ellipse cx="141" cy="219" rx="72" ry="35" />
      </svg>
    </div>
  );
}
